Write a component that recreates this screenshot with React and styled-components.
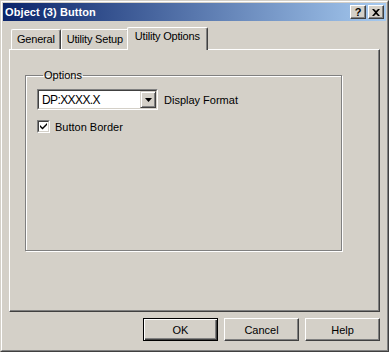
import React from "react";
import styled, { createGlobalStyle } from "styled-components";

const face = "#d4d0c8";
const shadow = "#808080";
const dark = "#404040";

const GlobalStyle = createGlobalStyle`
  html, body {
    margin: 0;
    padding: 0;
    background: ${face};
  }
  body {
    font-family: "Liberation Sans", Arial, sans-serif;
    font-size: 11px;
    color: #000;
  }
`;

const Window = styled.div`
  box-sizing: border-box;
  width: 389px;
  height: 352px;
  background: ${face};
  border: 1px solid;
  border-color: ${face} ${dark} ${dark} ${face};
  display: flex;
  flex-direction: column;
`;

const Inner = styled.div`
  flex: 1;
  border: 1px solid;
  border-color: #fff ${shadow} ${shadow} #fff;
  padding: 1px;
  display: flex;
  flex-direction: column;
`;

const TitleBar = styled.div`
  height: 18px;
  display: flex;
  align-items: center;
  padding: 0 2px;
  background: linear-gradient(to right, #0a246a, #a6caf0);
  color: #fff;
  font-weight: bold;
  font-size: 11px;
`;

const TitleText = styled.div`
  flex: 1;
  letter-spacing: 0.1px;
`;

const CaptionButton = styled.div`
  box-sizing: border-box;
  width: 16px;
  height: 14px;
  margin-left: ${(p) => p.$gap || 0}px;
  background: ${face};
  border: 1px solid;
  border-color: #fff ${dark} ${dark} #fff;
  box-shadow: inset -1px -1px 0 ${shadow};
  display: flex;
  align-items: center;
  justify-content: center;
  color: #000;
  font-size: 11px;
  font-weight: bold;
  line-height: 1;
`;

const Body = styled.div`
  flex: 1;
  display: flex;
  flex-direction: column;
  padding: 7px 6px 0 6px;
`;

const TabRow = styled.div`
  display: flex;
  align-items: flex-end;
  height: 22px;
  padding-left: 2px;
  position: relative;
  z-index: 1;
  margin-bottom: -1px;
`;

const Tab = styled.div`
  box-sizing: border-box;
  height: ${(p) => (p.$active ? 23 : 20)}px;
  margin: ${(p) => (p.$active ? "0 -2px" : "0 0 1px 0")};
  padding: ${(p) => (p.$active ? "2px 7px 0 7px" : "3px 5px 0 5px")};
  background: ${face};
  border-top: 1px solid #fff;
  border-left: 1px solid #fff;
  border-right: 1px solid ${dark};
  border-top-left-radius: 2px;
  border-top-right-radius: 2px;
  box-shadow: inset -1px 0 0 ${shadow};
  font-size: 11px;
  letter-spacing: -0.2px;
  white-space: nowrap;
  position: relative;
  z-index: ${(p) => (p.$active ? 2 : 1)};
`;

const Panel = styled.div`
  box-sizing: border-box;
  height: 263px;
  border: 1px solid;
  border-color: #fff ${dark} ${dark} #fff;
  box-shadow: inset -1px -1px 0 ${shadow};
  padding: 25px 0 0 15px;
`;

const GroupBox = styled.fieldset`
  box-sizing: border-box;
  width: 317px;
  height: 182px;
  margin: -6px 0 0 0;
  padding: 8px 11px 0 11px;
  border: 1px solid ${shadow};
  box-shadow: 1px 1px 0 #fff, inset 1px 1px 0 #fff;
  display: flex;
  flex-direction: column;
  gap: 10px;
`;

const Legend = styled.legend`
  padding: 0 1px;
  margin-left: 6px;
  font-size: 11px;
`;

const FieldRow = styled.div`
  display: flex;
  align-items: center;
  gap: 6px;
  font-size: 11px;
`;

const Combo = styled.div`
  box-sizing: border-box;
  width: 121px;
  height: 21px;
  border: 1px solid;
  border-color: ${shadow} #fff #fff ${shadow};
  display: flex;
`;

const ComboInner = styled.div`
  flex: 1;
  display: flex;
  align-items: center;
  border: 1px solid;
  border-color: ${dark} ${face} ${face} ${dark};
  background: #fff;
`;

const ComboText = styled.div`
  flex: 1;
  padding-left: 3px;
  font-size: 12px;
  letter-spacing: -0.6px;
`;

const DropButton = styled.div`
  box-sizing: border-box;
  width: 16px;
  height: 17px;
  background: ${face};
  border: 1px solid;
  border-color: ${face} ${dark} ${dark} ${face};
  box-shadow: inset 1px 1px 0 #fff, inset -1px -1px 0 ${shadow};
  display: flex;
  align-items: center;
  justify-content: center;
`;

const CheckRow = styled.div`
  display: flex;
  align-items: center;
  gap: 5px;
  font-size: 11px;
`;

const CheckBox = styled.div`
  box-sizing: border-box;
  width: 13px;
  height: 13px;
  border: 1px solid;
  border-color: ${shadow} #fff #fff ${shadow};
  display: flex;
`;

const CheckInner = styled.div`
  flex: 1;
  border: 1px solid;
  border-color: ${dark} ${face} ${face} ${dark};
  background: #fff;
  display: flex;
  align-items: center;
  justify-content: center;
`;

const ButtonRow = styled.div`
  display: flex;
  justify-content: flex-end;
  gap: 6px;
  padding-top: 6px;
`;

const Button = styled.div`
  box-sizing: border-box;
  width: 75px;
  height: 23px;
  background: ${face};
  border: 1px solid;
  border-color: ${(p) => (p.$default ? "#000" : `#fff ${dark} ${dark} #fff`)};
  box-shadow: ${(p) =>
    p.$default
      ? `inset 1px 1px 0 #fff, inset -1px -1px 0 ${dark}, inset -2px -2px 0 ${shadow}`
      : `inset -1px -1px 0 ${shadow}`};
  display: flex;
  align-items: center;
  justify-content: center;
  font-size: 11px;
`;

export default function App() {
  return (
    <>
      <GlobalStyle />
      <Window>
        <Inner>
          <TitleBar>
            <TitleText>Object (3) Button</TitleText>
            <CaptionButton>?</CaptionButton>
            <CaptionButton $gap={2}>
              <svg width="8" height="7" viewBox="0 0 8 7">
                <path d="M0 0h2l2 2 2-2h2L5 3.5 8 7H6L4 5 2 7H0l3-3.5z" fill="#000" />
              </svg>
            </CaptionButton>
          </TitleBar>
          <Body>
            <TabRow>
              <Tab>General</Tab>
              <Tab>Utility Setup</Tab>
              <Tab $active>Utility Options</Tab>
            </TabRow>
            <Panel>
              <GroupBox>
                <Legend>Options</Legend>
                <FieldRow>
                  <Combo>
                    <ComboInner>
                      <ComboText>DP:XXXX.X</ComboText>
                      <DropButton>
                        <svg width="7" height="4" viewBox="0 0 7 4">
                          <path d="M0 0h7L3.5 4z" fill="#000" />
                        </svg>
                      </DropButton>
                    </ComboInner>
                  </Combo>
                  <span>Display Format</span>
                </FieldRow>
                <CheckRow>
                  <CheckBox>
                    <CheckInner>
                      <svg width="7" height="7" viewBox="0 0 7 7">
                        <path d="M0 2l2.5 2.5L7 0v2L2.5 6.5 0 4z" fill="#000" />
                      </svg>
                    </CheckInner>
                  </CheckBox>
                  <span>Button Border</span>
                </CheckRow>
              </GroupBox>
            </Panel>
            <ButtonRow>
              <Button $default>OK</Button>
              <Button>Cancel</Button>
              <Button>Help</Button>
            </ButtonRow>
          </Body>
        </Inner>
      </Window>
    </>
  );
}
